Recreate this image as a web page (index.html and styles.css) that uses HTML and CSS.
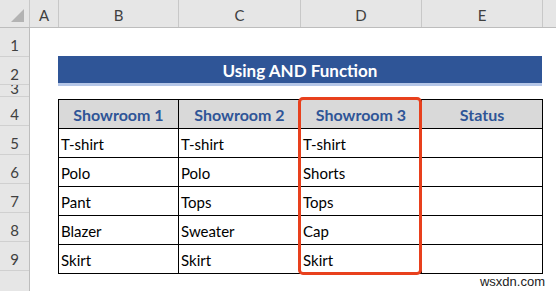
FILE: index.html
```html
<!DOCTYPE html>
<html>
<head>
<meta charset="utf-8">
<link rel="stylesheet" href="styles.css">
</head>
<body>
<div class="sheet">
  <div class="colbar">
    <div class="corner"><svg width="14" height="14" viewBox="0 0 14 14"><polygon points="13,0 13,13 0,13" fill="#b3b3b3"/></svg></div>
    <div class="ch col-a">A</div>
    <div class="ch col-b">B</div>
    <div class="ch col-c">C</div>
    <div class="ch col-d">D</div>
    <div class="ch col-e">E</div>
    <div class="ch col-f"></div>
  </div>
  <div class="body">
    <div class="rowbar">
      <div class="rh r-1">1</div>
      <div class="rh r-2">2</div>
      <div class="rh r-short"><span class="clip"><span class="clip-in">3</span></span></div>
      <div class="rh r-std">4</div>
      <div class="rh r-std">5</div>
      <div class="rh r-std">6</div>
      <div class="rh r-std">7</div>
      <div class="rh r-std">8</div>
      <div class="rh r-std">9</div>
      <div class="rh r-last"></div>
    </div>
    <div class="area">
      <div class="title">Using AND Function</div>
      <div class="grid">
        <div class="hd">Showroom 1</div>
        <div class="hd">Showroom 2</div>
        <div class="hd">Showroom 3</div>
        <div class="hd">Status</div>
        <div class="cell">T-shirt</div><div class="cell">T-shirt</div><div class="cell">T-shirt</div><div class="cell"></div>
        <div class="cell">Polo</div><div class="cell">Polo</div><div class="cell">Shorts</div><div class="cell"></div>
        <div class="cell">Pant</div><div class="cell">Tops</div><div class="cell">Tops</div><div class="cell"></div>
        <div class="cell">Blazer</div><div class="cell">Sweater</div><div class="cell">Cap</div><div class="cell"></div>
        <div class="cell">Skirt</div><div class="cell">Skirt</div><div class="cell">Skirt</div><div class="cell"></div>
      </div>
      <div class="highlight"></div>
      <div class="watermark">wsxdn.com</div>
    </div>
  </div>
</div>
</body>
</html>
```

FILE: styles.css
```css
html, body {
  margin: 0;
  padding: 0;
  background: #ffffff;
}
.sheet {
  width: 556px;
  height: 291px;
  overflow: hidden;
  font-family: Lato, "Open Sans", sans-serif;
  color: #000;
}
.colbar {
  display: flex;
  height: 28px;
  background: #e6e6e6;
  border-bottom: 1px solid #bdbdbd;
  box-sizing: border-box;
}
.corner {
  width: 30px;
  box-sizing: border-box;
  border-right: 1px solid #c8c8c8;
  display: flex;
  justify-content: flex-end;
  align-items: flex-end;
  padding: 0 4px 4px 0;
}
.ch {
  box-sizing: border-box;
  border-right: 1px solid #c8c8c8;
  display: flex;
  justify-content: center;
  align-items: center;
  padding-top: 2px;
  font-size: 15px;
  color: #404040;
}
.col-a { width: 29px; }
.col-b { width: 120px; }
.col-c { width: 122px; }
.col-d { width: 121px; }
.col-e { width: 121px; }
.col-f { flex: 1; border-right: none; }

.body {
  display: flex;
  height: 263px;
}
.rowbar {
  width: 30px;
  box-sizing: border-box;
  background: #e6e6e6;
  border-right: 1px solid #bdbdbd;
  display: flex;
  flex-direction: column;
}
.rh {
  box-sizing: border-box;
  border-bottom: 1px solid #d0d0d0;
  display: flex;
  justify-content: center;
  align-items: center;
  font-size: 15px;
  color: #404040;
  overflow: hidden;
  flex-shrink: 0;
}
.r-1 { height: 29px; padding-top: 6px; }
.r-2 { height: 28px; padding-top: 6px; }
.r-std { height: 29px; padding-top: 6px; }
.r-short { height: 12px; align-items: flex-start; }
.clip {
  display: block;
  height: 9px;
  overflow: hidden;
}
.clip-in {
  display: block;
  line-height: 12px;
  margin-top: -3px;
}
.r-last { flex: 1; border-bottom: none; }

.area {
  position: relative;
  flex: 1;
  padding: 28px 0 0 28px;
  box-sizing: border-box;
}
.title {
  width: 484px;
  height: 30px;
  box-sizing: border-box;
  background: #2f5597;
  border-bottom: 3px solid #b4c6e7;
  color: #ffffff;
  font-weight: 700;
  font-size: 17px;
  display: flex;
  justify-content: center;
  align-items: center;
  padding-top: 1px;
}
.grid {
  margin-top: 13px;
  width: 485px;
  box-sizing: border-box;
  display: grid;
  grid-template-columns: 119px 121px 120px 120px;
  grid-auto-rows: 28px;
  gap: 1px;
  padding: 1px;
  background: #000;
}
.hd {
  background: #d9d9d9;
  color: #2f5597;
  font-weight: 700;
  font-size: 16px;
  display: flex;
  justify-content: center;
  align-items: center;
  padding-top: 1px;
}
.cell {
  background: #ffffff;
  font-size: 15px;
  display: flex;
  align-items: center;
  padding: 2px 0 0 2px;
}
.highlight {
  position: absolute;
  left: 268px;
  top: 69px;
  width: 124px;
  height: 178px;
  box-sizing: border-box;
  border: 3px solid #e8401d;
  border-radius: 5px;
}
.watermark {
  position: absolute;
  right: 11px;
  bottom: 2px;
  font-family: "Liberation Sans", Arial, sans-serif;
  font-size: 13px;
  color: #222;
}
```
